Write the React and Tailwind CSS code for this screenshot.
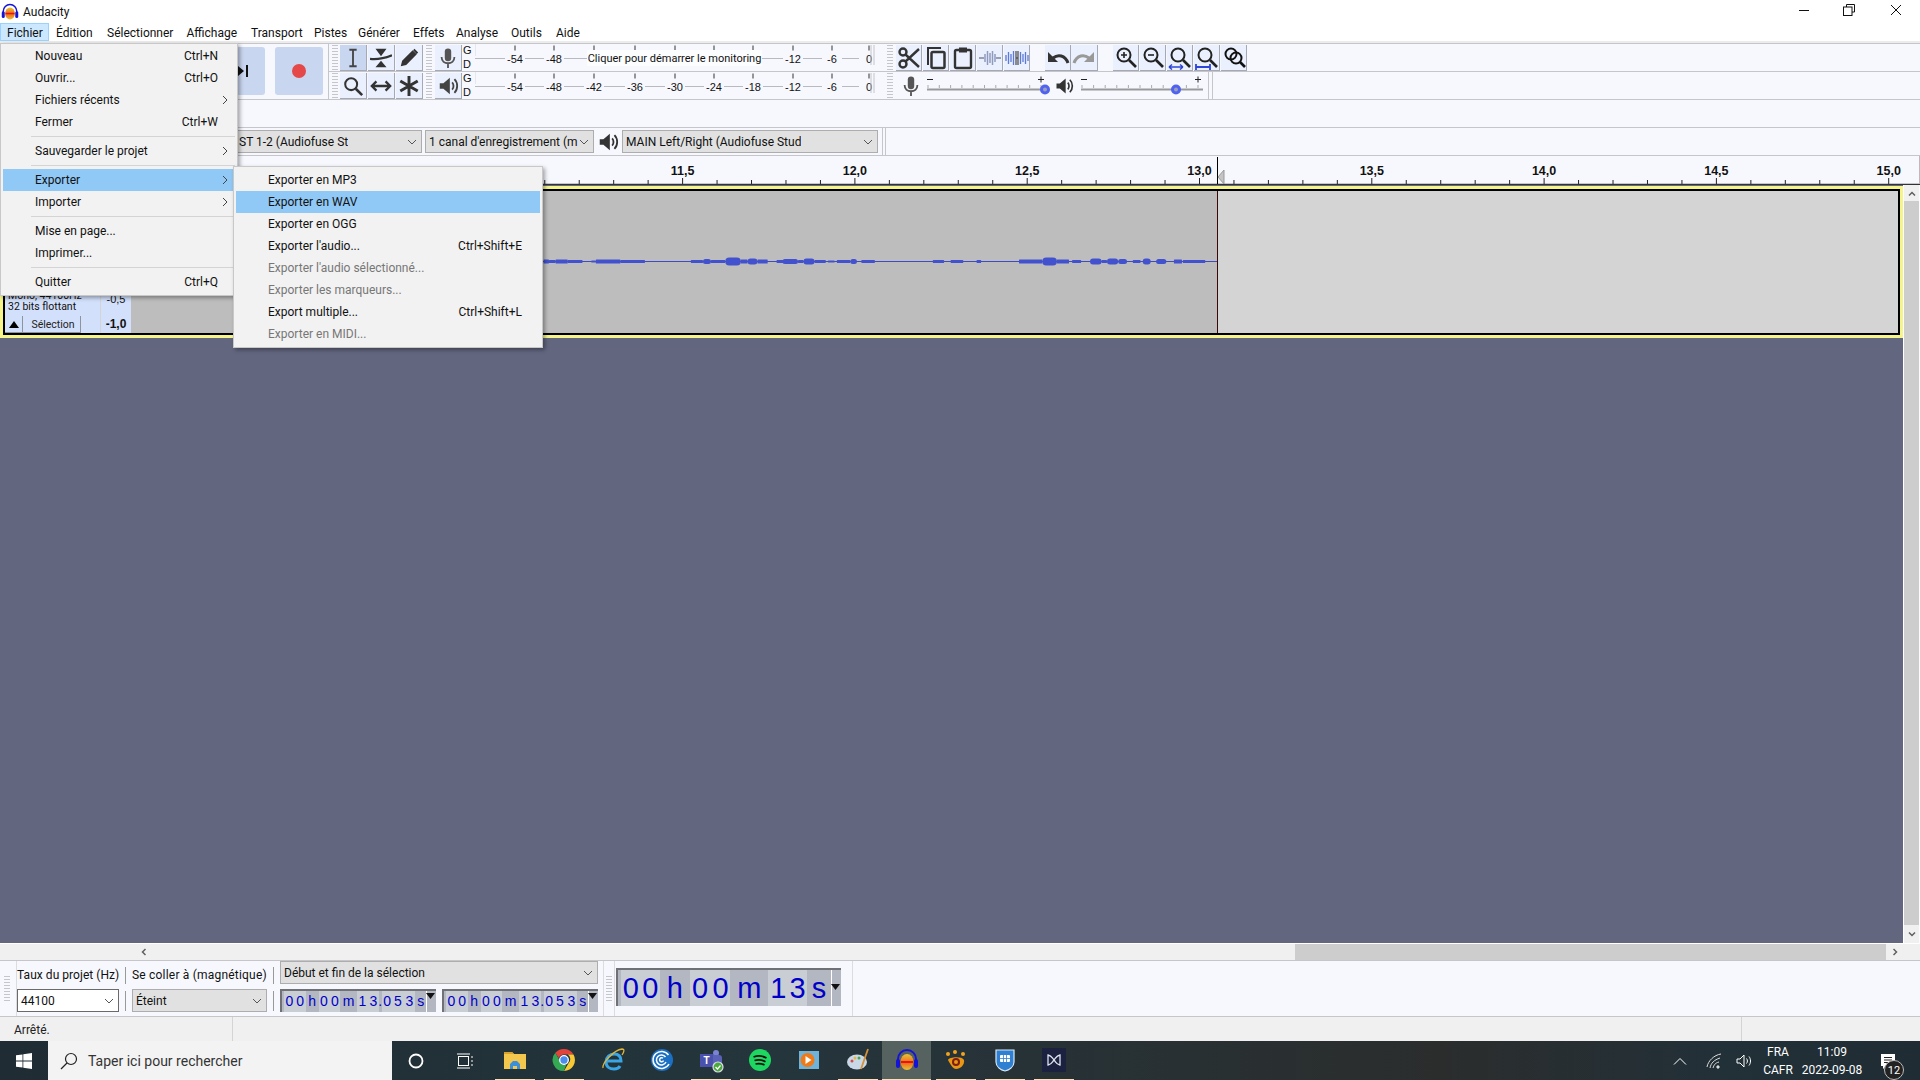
import React from "react";

const mainMenu = [
  { label: "Nouveau", key: "Ctrl+N" },
  { label: "Ouvrir...", key: "Ctrl+O" },
  { label: "Fichiers récents", arrow: true },
  { label: "Fermer", key: "Ctrl+W" },
  { sep: true },
  { label: "Sauvegarder le projet", arrow: true },
  { sep: true },
  { label: "Exporter", arrow: true, active: true },
  { label: "Importer", arrow: true },
  { sep: true },
  { label: "Mise en page..." },
  { label: "Imprimer..." },
  { sep: true },
  { label: "Quitter", key: "Ctrl+Q" },
];

const subMenu = [
  { label: "Exporter en MP3" },
  { label: "Exporter en WAV", active: true },
  { label: "Exporter en OGG" },
  { label: "Exporter l'audio...", key: "Ctrl+Shift+E" },
  { label: "Exporter l'audio sélectionné...", off: true },
  { label: "Exporter les marqueurs...", off: true },
  { label: "Export multiple...", key: "Ctrl+Shift+L" },
  { label: "Exporter en MIDI...", off: true },
];

const menuBar = [
  ["Édition", "w-[51px]"],
  ["Sélectionner", "w-[79.5px]"],
  ["Affichage", "w-[64.5px]"],
  ["Transport", "w-[63px]"],
  ["Pistes", "w-[44px]"],
  ["Générer", "w-[55px]"],
  ["Effets", "w-[43px]"],
  ["Analyse", "w-[55px]"],
  ["Outils", "w-[45px]"],
  ["Aide", "w-[40px]"],
];

// waveform blocks read off the reference: zoomed x1, zoomed x2, half height
const wave = [
  [8, 20, 2], [20, 35, 1.5], [35, 62, 2], [62, 95, 1.5], [115, 125, 1], [125, 180, 2], [180, 235, 1.5],
  [338, 365, 1.5], [365, 383, 2.5], [383, 415, 1.5], [415, 450, 4], [450, 465, 2], [465, 487, 3], [487, 510, 2],
  [530, 545, 1.5], [543, 578, 2.5], [578, 590, 1.5], [590, 615, 3], [615, 640, 1.5], [645, 660, 1], [665, 695, 1.5],
  [695, 710, 2.5], [720, 750, 1.5], [880, 905, 1.5], [920, 948, 1.5], [978, 988, 1.5], [1073, 1125, 2], [1125, 1158, 4],
  [1158, 1185, 2], [1192, 1212, 1.5], [1232, 1258, 3], [1258, 1270, 1.5], [1270, 1295, 3], [1295, 1315, 2.5],
  [1328, 1345, 1.5], [1350, 1368, 3], [1380, 1403, 2.5], [1420, 1438, 2], [1440, 1490, 1.5],
];

function Chevron({ className = "" }) {
  return (
    <svg width="10" height="6" viewBox="0 0 10 6" className={className}>
      <path d="M1 1l4 4 4-4" fill="none" stroke="#555" strokeWidth="1" />
    </svg>
  );
}

function Grip({ className = "" }) {
  return (
    <div className={`flex flex-col justify-center gap-[2px] self-stretch ${className}`}>
      {[...Array(9)].map((_, i) => (
        <div key={i} className="h-[1px] w-[6px] bg-[#c4c6cc]" />
      ))}
    </div>
  );
}

function Btn({ children, on, w = "w-[26px]" }) {
  return (
    <div className={`flex h-[26px] ${w} shrink-0 items-center justify-center border-b border-r border-[#a5a9b3] ${on ? "bg-[#c9d6ef]" : "bg-[#eaf0fd]"}`}>
      {children}
    </div>
  );
}

function Ico({ children, size = 22 }) {
  return (
    <svg width={size} height={size} viewBox="0 0 24 24" fill="none" stroke="#333" strokeWidth="2.4">
      {children}
    </svg>
  );
}

function SpeakerIcon({ size = 22, color = "#444" }) {
  return (
    <Ico size={size}>
      <path d="M3 9h4l7-6v18l-7-6H3z" fill={color} stroke="none" />
      <path d="M16.5 8c2 2 2 6 0 8" stroke={color} strokeWidth="2" />
      <path d="M19 4.500c4 4 4 11 0 15" stroke={color} strokeWidth="2" />
    </Ico>
  );
}

function MicIcon({ size = 22 }) {
  return (
    <Ico size={size}>
      <rect x="8.500" y="1.500" width="7" height="14" rx="3.500" fill="#555" stroke="none" />
      <path d="M5 11c0 9 14 9 14 0M12 18v5" stroke="#555" strokeWidth="2" />
    </Ico>
  );
}

function Glass({ children, extra }) {
  return (
    <Ico size={24}>
      <circle cx="10" cy="9" r="6.500" strokeWidth="2" stroke="#222" />
      <path d="M15 14l7 7" strokeWidth="2.600" stroke="#222" />
      {children}
      {extra}
    </Ico>
  );
}

function Meter({ hint }) {
  const marks = [["-54", 40], ["-48", 79], ["-42", 119], ["-36", 160], ["-30", 200], ["-24", 239], ["-18", 278], ["-12", 318], ["-6", 357], ["0", 394]];
  return (
    <svg width="400" height="27" viewBox="0 0 400 27" className="shrink-0">
      <path d="M0 14.500h398" stroke="#b8bac0" strokeWidth="1" />
      <path d="M0 0v12" stroke="#d8d8dc" strokeWidth="1" />
      {marks.map(([t, x]) => (
        <g key={t}>
          <path d={`M${x} 1.500v5`} stroke="#333" strokeWidth="1" />
          {!(hint && x > 100 && x < 290) && (
            <g>
              <rect x={x - 10} y="8" width="20" height="13" fill="#f7f8fe" />
              <text x={x} y="18.500" textAnchor="middle" fontSize="11" fill="#111" fontFamily="Liberation Sans">{t}</text>
            </g>
          )}
        </g>
      ))}
      <path d="M396 1v20M399 1v20" stroke="#c4c4c8" strokeWidth="1" />
      {hint && (
        <g>
          <rect x="112" y="6" width="175" height="16" fill="#fcfdff" />
          <text x="199.500" y="18" textAnchor="middle" fontSize="11" fill="#111" fontFamily="Roboto">Cliquer pour démarrer le monitoring</text>
        </g>
      )}
    </svg>
  );
}

function GD() {
  return (
    <div className="flex h-[27px] w-[13px] shrink-0 flex-col justify-between pl-[1px] text-[11px] leading-[13px] text-[#111] font-['Liberation_Sans',sans-serif]">
      <span>G</span>
      <span>D</span>
    </div>
  );
}

function Slider({ thumb, width }) {
  const ticks = [...Array(11)].map((_, i) => 2 + (i * (width - 6)) / 10);
  return (
    <svg width={width + 8} height="27" viewBox={`0 0 ${width + 8} 27`} className="shrink-0">
      <path d="M1 7.500h6" stroke="#222" strokeWidth="1" />
      <path d={`M${width - 7} 7.500h6M${width - 4} 4.500v6`} stroke="#222" strokeWidth="1" />
      <path d={`M1 17.500h${width}`} stroke="#999" strokeWidth="2" />
      {ticks.map((x) => (
        <path key={x} d={`M${x} 13v3`} stroke="#aaa" strokeWidth="1" />
      ))}
      <circle cx={thumb} cy="17.500" r="3.500" fill="#9a9fb8" stroke="#4f62f0" strokeWidth="3" />
    </svg>
  );
}

function Combo({ children, className = "", white }) {
  return (
    <div className={`flex items-center justify-between overflow-hidden border px-[3px] ${white ? "border-[#6a6a6a] bg-white" : "border-[#adadad] bg-[#e1e1e1]"} ${className}`}>
      <span className="overflow-hidden whitespace-nowrap text-[12px] text-[#111]">{children}</span>
      <Chevron className="mr-[1px] shrink-0" />
    </div>
  );
}

function TimeBox({ cells, className, fontClass, arrowW, tail }) {
  return (
    <div className={`flex shrink-0 border-l-2 border-t-2 border-[#6f7176] bg-[#b3b7c2] ${className}`}>
      {cells.map(([ch, w, light], i) => (
        <span key={i} style={{ width: w }} className={`flex items-center justify-center overflow-hidden text-[#0000c8] ${fontClass} ${light ? "bg-[#c9cdd4]" : ""}`}>
          {ch}
        </span>
      ))}
      <div style={{ width: arrowW }} className="relative ml-auto border-l border-white">
        <svg width="9" height="6" viewBox="0 0 9 6" className={`absolute right-[1px] ${tail}`}>
          <path d="M0 0h9L4.500 6z" fill="#111" />
        </svg>
      </div>
    </div>
  );
}

const smallCells = [
  ["", 2, false], ["0", 11, true], ["0", 11, true], ["h", 13, false], ["0", 11, true], ["0", 11, true], ["m", 17, false],
  ["1", 11, true], ["3", 11, true], [".", 3, false], ["0", 11, true], ["5", 11, true], ["3", 12, true], ["s", 11, false],
];
const bigCells = [
  ["", 3, false], ["0", 20, true], ["0", 19, true], ["h", 30, false], ["0", 21, true], ["0", 20, true], ["m", 38, false],
  ["1", 20, true], ["3", 19, true], ["s", 24, false],
];

function Track() {
  return (
    <div className="h-[152px] w-[1903px] border-[3px] border-[#f5f58c]">
      <div className="flex h-full border-2 border-black bg-[#d4d4d4]">
        <div className="flex w-[95px] shrink-0 flex-col justify-end bg-[#d3e0fb] text-[10.500px] leading-[11px] text-[#111]">
          <div className="pl-[3px]">Mono, 44100Hz</div>
          <div className="mb-[4px] pl-[3px]">32 bits flottant</div>
          <div className="flex h-[17px]">
            <div className="flex w-[18px] items-center justify-center border-b border-r border-[#8f939e] bg-[#d3e0fb]">
              <svg width="10" height="7" viewBox="0 0 10 7"><path d="M5 0l5 7H0z" fill="#000" /></svg>
            </div>
            <div className="flex w-[58px] items-center justify-center border-b border-r border-[#8f939e] bg-[#d3e0fb] pl-[3px] text-[#222]">Sélection</div>
          </div>
        </div>
        <div className="ml-[1px] flex w-[30px] shrink-0 flex-col items-center justify-end bg-[#d3e0fb] pb-[2px] text-[#111] font-['Liberation_Sans',sans-serif]">
          <div className="mb-[12px] text-[11px] leading-[11px]">-0,5</div>
          <div className="text-[12px] font-bold leading-[14px]">-1,0</div>
        </div>
        <svg width="1086" height="142" viewBox="131 191 1086 142" className="shrink-0 bg-[#bdbdbd]">
          <path d="M543 261.500H1217" stroke="#3f4bc6" strokeWidth="1" />
          {wave.map(([a, b, h]) => (
            <rect key={a} x={540 + a / 2.24} y={261.5 - h} width={(b - a) / 2.24} height={h * 2} rx={h >= 2.5 ? h : 0.5} fill="#4252cf" />
          ))}
        </svg>
        <div className="w-[1px] shrink-0 bg-[#3a0808]" />
      </div>
    </div>
  );
}

function Ruler() {
  const ticks = [];
  for (let i = 0; i < 46; i++) ticks.push(338 + i * 34.46);
  const labels = ["10,5", "11,0", "11,5", "12,0", "12,5", "13,0", "13,5", "14,0", "14,5", "15,0"];
  return (
    <svg width="1920" height="29" viewBox="0 156 1920 29" className="block shrink-0 bg-[#f7f8fe]">
      {ticks.map((x, i) => (
        <path key={i} d={i % 5 === 0 ? `M${x} 178v6` : `M${x} 180v4`} stroke="#222" strokeWidth="1" />
      ))}
      {labels.map((t, i) => (
        <text key={t} x={338 + i * 172.3} y="174.500" textAnchor="middle" fontSize="12.500" fontWeight="700" fill="#111" fontFamily="Liberation Sans">{t}</text>
      ))}
      <path d="M0 184.500H1920" stroke="#333" strokeWidth="1.500" />
      <path d="M1217.500 157v27" stroke="#000" strokeWidth="1" />
      <path d="M1224 170v14l-6-7z" fill="#c4c4c4" stroke="#999" strokeWidth="1" />
      <path d="M1919.500 156v28" stroke="#bbb" strokeWidth="1" />
    </svg>
  );
}

function MenuRow({ item, className }) {
  return (
    <div className={`flex h-[22px] items-center justify-between ${item.active ? "bg-[#90c8f6]" : ""} ${item.off ? "text-[#777]" : "text-[#111]"} ${className}`}>
      <span>{item.label}</span>
      {item.key && <span>{item.key}</span>}
      {item.arrow && (
        <svg width="6" height="10" viewBox="0 0 6 10" className="mr-[-10px]">
          <path d="M1 1l4 4-4 4" fill="none" stroke="#444" strokeWidth="1" />
        </svg>
      )}
    </div>
  );
}

function TaskSlot({ children, line = true, active }) {
  return (
    <div className={`flex h-[40px] w-[49px] shrink-0 flex-col items-center ${active ? "bg-[#55625f]" : ""}`}>
      <div className="flex flex-1 items-center justify-center">{children}</div>
      <div className={`h-[2px] ${active ? "w-full" : "w-[40px]"} ${line ? "bg-[#fcdfb8]" : ""}`} />
    </div>
  );
}

function AudacityLogo({ size = 24 }) {
  return (
    <svg width={size} height={size} viewBox="0 0 24 24">
      <defs>
        <linearGradient id="audaFill" x1="0" y1="0" x2="0" y2="1">
          <stop offset="0" stopColor="#e8c23a" />
          <stop offset="0.55" stopColor="#f06a1a" />
          <stop offset="1" stopColor="#e8c23a" />
        </linearGradient>
      </defs>
      <ellipse cx="12" cy="14" rx="6.500" ry="8" fill="url(#audaFill)" />
      <path d="M6 14h12" stroke="#e11" strokeWidth="2" />
      <path d="M3 15V11a9 9 0 0118 0v4" fill="none" stroke="#1414d8" strokeWidth="2" />
      <rect x="1" y="11" width="4" height="9" rx="2" fill="#1414d8" />
      <rect x="19" y="11" width="4" height="9" rx="2" fill="#1414d8" />
    </svg>
  );
}

function Taskbar() {
  return (
    <div className="flex h-[40px] shrink-0 items-center bg-[linear-gradient(90deg,#1f2c33_0%,#24353c_40%,#2b2d2d_75%,#223038_90%,#1f2c33_100%)] text-white">
      <div className="flex h-full w-[48px] shrink-0 items-center justify-center">
        <svg width="16" height="16" viewBox="0 0 16 16" fill="#fff">
          <path d="M0 2.300l6.500-.9v6.200H0zM7.300 1.300L16 0v7.600H7.300zM0 8.400h6.500v6.200L0 13.700zM7.300 8.400H16V16l-8.700-1.200z" />
        </svg>
      </div>
      <div className="flex h-full w-[344px] shrink-0 items-center bg-[#f3f3f3] pl-[12px] text-[#333]">
        <svg width="18" height="18" viewBox="0 0 18 18" fill="none" stroke="#222" strokeWidth="1.200">
          <circle cx="11" cy="7" r="5.500" />
          <path d="M7 11l-6 6" />
        </svg>
        <span className="ml-[10px] text-[14px]">Taper ici pour rechercher</span>
      </div>
      <div className="flex h-full w-[48px] shrink-0 items-center justify-center">
        <svg width="16" height="16" viewBox="0 0 16 16"><circle cx="8" cy="8" r="6.500" fill="none" stroke="#fff" strokeWidth="1.800" /></svg>
      </div>
      <div className="flex h-full w-[50px] shrink-0 items-center justify-center">
        <svg width="18" height="16" viewBox="0 0 18 16" fill="none" stroke="#fff" strokeWidth="1">
          <rect x="2.500" y="3.500" width="10" height="9" />
          <path d="M1 1h13M1 15h13M16 3v2M16 7v2M16 11v2" />
        </svg>
      </div>
      <TaskSlot>
        <svg width="24" height="24" viewBox="0 0 24 24">
          <path d="M1 4h8l2 2h12v15H1z" fill="#f3c64e" />
          <path d="M1 4h8l2 2H1z" fill="#d7a12c" />
          <path d="M7 21v-5l3-3h4l3 3v5h-3v-3h-4v3z" fill="#3a8fd8" />
        </svg>
      </TaskSlot>
      <TaskSlot>
        <svg width="24" height="24" viewBox="0 0 24 24">
          <path d="M12 1a11 11 0 019.500 5.500H12a5.500 5.500 0 00-5.200 3.700L3.300 4.800A11 11 0 0112 1z" fill="#e0443a" />
          <path d="M21.500 6.500A11 11 0 0112 23l4.800-8.200a5.500 5.500 0 00-1-8.300z" fill="#f7c935" />
          <path d="M3.300 4.800l4.700 8.400a5.500 5.500 0 006.500 3.100L11.800 23A11 11 0 013.300 4.800z" fill="#34a853" />
          <circle cx="12" cy="12" r="4.300" fill="#4a8cf0" stroke="#fff" strokeWidth="1.300" />
        </svg>
      </TaskSlot>
      <TaskSlot line={false}>
        <svg width="26" height="26" viewBox="0 0 26 26" fill="none">
          <path d="M6 14h15c0-5-3-7-7-7s-8 3-8 8 4 7 8 7c3 0 5-1 6-3" stroke="#39a5e6" strokeWidth="3" />
          <path d="M3 21C2 16 14 3 22 2c3 0 2 3 0 6" stroke="#e0b53a" strokeWidth="1.300" />
        </svg>
      </TaskSlot>
      <TaskSlot line={false}>
        <svg width="24" height="24" viewBox="0 0 24 24" fill="none">
          <circle cx="12" cy="12" r="11" fill="#1b70c4" />
          <path d="M19 16a8.500 8.500 0 11-.5-9M16 14a5 5 0 11-.5-5M13.500 12.500a2 2 0 11-.5-2.200" stroke="#fff" strokeWidth="1.500" />
        </svg>
      </TaskSlot>
      <TaskSlot>
        <svg width="26" height="26" viewBox="0 0 26 26">
          <circle cx="18" cy="6" r="3" fill="#7b83d6" />
          <rect x="10" y="8" width="14" height="12" rx="3" fill="#5a62b8" />
          <rect x="2" y="7" width="13" height="13" fill="#4a52ad" />
          <text x="8.500" y="17" textAnchor="middle" fontSize="10" fontWeight="700" fill="#fff" fontFamily="Liberation Sans">T</text>
          <circle cx="20" cy="20" r="5" fill="#4caa3a" stroke="#dde" strokeWidth="1.200" />
          <path d="M17.500 20l2 2 3-3.500" fill="none" stroke="#fff" strokeWidth="1.200" />
        </svg>
      </TaskSlot>
      <TaskSlot>
        <svg width="24" height="24" viewBox="0 0 24 24" fill="none">
          <circle cx="12" cy="12" r="11" fill="#1ed760" />
          <path d="M5.500 9c4-1.500 9-1.200 13 1M6.500 12.500c3.500-1 7.500-.7 11 1.200M7.500 16c3-.8 6-.5 9 1" stroke="#111" strokeWidth="1.800" />
        </svg>
      </TaskSlot>
      <TaskSlot line={false}>
        <svg width="22" height="22" viewBox="0 0 22 22">
          <rect x="1" y="2" width="20" height="18" fill="#6fb4d8" />
          <circle cx="9.500" cy="11" r="7" fill="#ef7a1a" />
          <path d="M7.500 7l6 4-6 4z" fill="#fff" />
        </svg>
      </TaskSlot>
      <TaskSlot>
        <svg width="24" height="24" viewBox="0 0 24 24">
          <ellipse cx="11" cy="14" rx="10" ry="7.500" fill="#c9d8e6" />
          <circle cx="6" cy="13" r="1.500" fill="#d94a4a" />
          <circle cx="9" cy="10" r="1.500" fill="#e4b93c" />
          <circle cx="13" cy="10" r="1.500" fill="#49a44f" />
          <path d="M22 1l-7 20" stroke="#d5903a" strokeWidth="1.800" />
        </svg>
      </TaskSlot>
      <TaskSlot active>
        <AudacityLogo />
      </TaskSlot>
      <TaskSlot>
        <svg width="24" height="24" viewBox="0 0 24 24" fill="none">
          <path d="M4 12c1-3 14-4 16 0 1 5-4 9-8 9-3 0-6-5-8-9z" fill="#e89614" />
          <circle cx="12" cy="14" r="4" fill="#7c1f10" />
          <circle cx="12" cy="14" r="2" fill="#e89614" />
          <circle cx="4" cy="6" r="2" fill="#f1a51e" />
          <circle cx="11" cy="4" r="2" fill="#f1a51e" />
          <circle cx="19" cy="6" r="2" fill="#f1a51e" />
        </svg>
      </TaskSlot>
      <TaskSlot>
        <svg width="22" height="24" viewBox="0 0 22 24">
          <path d="M2 2h18v12c0 5-5 8-9 9-4-1-9-4-9-9z" fill="#2f80d2" stroke="#dbe9f5" strokeWidth="1.200" />
          <rect x="6" y="7" width="10" height="7" rx="1" fill="#fff" />
          <path d="M6 10.500h10M9.500 7v7M12.500 7v7" stroke="#2f80d2" strokeWidth="0.800" />
        </svg>
      </TaskSlot>
      <TaskSlot>
        <div className="flex h-[24px] w-[24px] items-center justify-center bg-[#1a2240]">
          <svg width="14" height="12" viewBox="0 0 14 12" fill="none" stroke="#dfe3ee" strokeWidth="1.300">
            <path d="M1 1c4 1 4 3 6 5 2-2 2-4 6-5v10c-4-1-4-3-6-5-2 2-2 4-6 5z" />
          </svg>
        </div>
      </TaskSlot>
      <div className="ml-auto flex h-full items-center">
        <div className="flex w-[40px] justify-center">
          <svg width="14" height="8" viewBox="0 0 14 8" fill="none" stroke="#fff" strokeWidth="1"><path d="M1 7.500l6-6 6 6" /></svg>
        </div>
        <div className="flex w-[28px] justify-center">
          <svg width="16" height="16" viewBox="0 0 16 16" fill="none" stroke="#ddd" strokeWidth="1">
            <path d="M1 14C2 8 8 2 15 1M4 15c1-5 4-8 10-10M7 15c1-3 2-5 6-6" />
            <circle cx="12" cy="14" r="1.200" fill="#ddd" />
          </svg>
        </div>
        <div className="flex w-[32px] justify-center">
          <svg width="17" height="16" viewBox="0 0 17 16" fill="none" stroke="#fff" strokeWidth="1">
            <path d="M1 6h3l4-4v12l-4-4H1zM10.500 5.500c1.200 1.500 1.200 3.500 0 5M13 3.500c2 2.500 2 6.500 0 9" />
          </svg>
        </div>
        <div className="flex w-[36px] flex-col items-center text-[12px] leading-[18px]">
          <span>FRA</span>
          <span>CAFR</span>
        </div>
        <div className="flex w-[72px] flex-col items-center text-[12px] leading-[18px]">
          <span>11:09</span>
          <span>2022-09-08</span>
        </div>
        <div className="relative flex w-[52px] justify-center pr-[12px]">
          <svg width="16" height="16" viewBox="0 0 16 16">
            <path d="M1 1h14v12H6l-3 3v-3H1z" fill="#fff" />
            <path d="M4 4.500h8M4 7h8M4 9.500h8" stroke="#222" strokeWidth="1" />
          </svg>
          <div className="absolute left-[16px] top-[7px] flex h-[20px] w-[20px] items-center justify-center rounded-full border border-[#bbb] bg-[#222] text-[11px] leading-none">12</div>
        </div>
      </div>
    </div>
  );
}

export default function App() {
  return (
    <div className="relative flex h-[1080px] w-[1920px] flex-col overflow-hidden bg-white font-[Roboto,sans-serif] text-[12px]">
      {/* title bar */}
      <div className="flex h-[23px] shrink-0 items-center justify-between">
        <div className="flex items-center pl-[1px] text-[#111]">
          <AudacityLogo size={18} />
          <span className="ml-[4px]">Audacity</span>
        </div>
        <div className="flex self-start pt-[4px]">
          <div className="flex w-[46px] justify-center"><svg width="12" height="12" viewBox="0 0 12 12"><path d="M1 6.500h10" stroke="#111" /></svg></div>
          <div className="flex w-[44px] justify-center">
            <svg width="12" height="12" viewBox="0 0 12 12" fill="none" stroke="#111"><path d="M3.500 3V.500h8v7.500H9" /><rect x=".5" y="3" width="8.500" height="8.500" /></svg>
          </div>
          <div className="flex w-[49px] justify-center"><svg width="12" height="12" viewBox="0 0 12 12"><path d="M1 1l10 10M11 1L1 11" stroke="#111" /></svg></div>
        </div>
      </div>

      {/* menu bar */}
      <div className="flex h-[18px] shrink-0 items-center text-[#111]">
        <div className="flex h-full w-[49px] items-center border border-[#99d1ff] bg-[#cce8ff] pl-[6px] pt-[1px]">Fichier</div>
        {menuBar.map(([m, w]) => (
          <div key={m} className={`${w} pl-[7px] pt-[1px]`}>{m}</div>
        ))}
      </div>
      <div className="h-[3px] shrink-0 border-b border-[#c6c6ca] bg-[#ececec]" />

      {/* transport, tools and meters */}
      <div className="flex h-[56px] shrink-0 bg-[#f7f8fe]">
        <div className="flex w-[329px] shrink-0 justify-end gap-[10px] border-b border-r border-[#c6c6ca] pr-[5px] pt-[3px]">
          <div className="flex h-[48px] w-[48px] items-center justify-end rounded-[3px] bg-[#c9d6ef] pr-[17px]">
            <svg width="10" height="12" viewBox="0 0 10 12"><path d="M0 1l6 5-6 5zM8 0h2v12H8z" fill="#111" /></svg>
          </div>
          <div className="flex h-[48px] w-[48px] items-center justify-center rounded-[3px] bg-[#c9d6ef]">
            <div className="h-[14px] w-[14px] rounded-full bg-[#e54848]" />
          </div>
        </div>
        <div className="flex min-w-0 flex-1 flex-col">
          <div className="flex h-[28px] items-end border-b border-[#c6c6ca]">
            <Grip className="w-[11px] shrink-0 items-center" />
            <Btn on w="w-[27px]"><Ico><path d="M8 3h8M12 3v18M8 21h8" stroke="#444" strokeWidth="2" /></Ico></Btn>
            <div className="ml-[1px]"><Btn w="w-[27px]"><Ico><path d="M6 2h12l-6 8zM12 15l6 7H6z" fill="#333" stroke="none" /><path d="M0 13c8 1 14 0 24-4" strokeWidth="2.500" /></Ico></Btn></div>
            <div className="ml-[1px]"><Btn w="w-[27px]"><Ico><path d="M3 21l1.500-6L16 3.500l4.500 4.500L9 19.500zM18 2l4 4-1.500 1.500-4-4z" fill="#333" stroke="none" /></Ico></Btn></div>
            <Grip className="w-[12px] shrink-0 items-center" />
            <Btn w="w-[27px]"><MicIcon /></Btn>
            <GD />
            <Meter hint />
            <Grip className="ml-[8px] w-[13px] shrink-0 items-center" />
            <Btn><Ico size={24}><circle cx="6" cy="6" r="3.500" /><circle cx="6" cy="18" r="3.500" /><path d="M8.500 8.500L22 21M8.500 15.500L22 3" /></Ico></Btn>
            <div className="ml-[1px]"><Btn><Ico size={24}><path d="M4 19V2h13" strokeWidth="2" /><rect x="7.500" y="6" width="13" height="16" rx="1.500" strokeWidth="2.500" /></Ico></Btn></div>
            <div className="ml-[1px]"><Btn><Ico size={24}><rect x="4" y="4" width="16" height="18" rx="1.500" strokeWidth="2.400" /><rect x="8" y="1.500" width="8" height="5" fill="#333" stroke="none" /></Ico></Btn></div>
            <div className="ml-[1px]"><Btn><Ico size={24}><path d="M1 12h5M18 12h5" stroke="#7c8799" strokeWidth="1.500" /><path d="M7 8v8M9.500 5v14M12 7v10M14.500 5v14M17 8v8" stroke="#8f9bbe" strokeWidth="1.500" /></Ico></Btn></div>
            <div className="ml-[1px]"><Btn><Ico size={24}><path d="M1 9v6M3.500 6v12M6 8v8M8.500 5v14M15.500 6v12M18 8v8M20.500 6v12M23 9v6" stroke="#5c78d8" strokeWidth="1.300" /><path d="M11 5v14M13 5v14M11 12h2" stroke="#555" strokeWidth="1.300" /></Ico></Btn></div>
            <div className="ml-[15px]"><Btn><Ico size={24}><path d="M2 6v10h10z" fill="#333" stroke="none" /><path d="M7 12c5-4 12-3 15 5" strokeWidth="3" /></Ico></Btn></div>
            <Btn w="w-[27px]"><Ico size={24}><path d="M22 6v10H12z" fill="#999" stroke="none" /><path d="M17 12c-5-4-12-3-15 5" stroke="#999" strokeWidth="3" /></Ico></Btn>
            <div className="ml-[15px]"><Btn><Glass><path d="M7 9h6M10 6v6" strokeWidth="1.600" stroke="#222" /></Glass></Btn></div>
            <div className="ml-[1px]"><Btn><Glass><path d="M7 9h6" strokeWidth="1.600" stroke="#222" /></Glass></Btn></div>
            <div className="ml-[1px]"><Btn><Glass extra={<path d="M1 21h14M1 21l3-2.500M1 21l3 2.500M15 21l-3-2.500M15 21l-3 2.500" stroke="#2f45d8" strokeWidth="1.500" />} /></Btn></div>
            <div className="ml-[1px]"><Btn><Glass extra={<path d="M1 18v6M15 18v6M1 21h14" stroke="#2f45d8" strokeWidth="1.800" />} /></Btn></div>
            <div className="ml-[1px]"><Btn><Ico size={24}><circle cx="9" cy="8" r="5.500" strokeWidth="2" stroke="#111" /><circle cx="14" cy="12" r="5.500" strokeWidth="2" stroke="#111" /><path d="M18 16l5 5" strokeWidth="2.600" stroke="#111" /></Ico></Btn></div>
          </div>
          <div className="flex h-[28px] items-end border-b border-[#c6c6ca]">
            <Grip className="w-[11px] shrink-0 items-center" />
            <Btn w="w-[27px]"><Ico><circle cx="10" cy="10" r="6.500" strokeWidth="2.200" /><path d="M15 15l7 7" strokeWidth="2.800" /></Ico></Btn>
            <div className="ml-[1px]"><Btn w="w-[27px]"><Ico><path d="M2 12h20M7 7l-5 5 5 5M17 7l5 5-5 5" strokeWidth="2.500" /></Ico></Btn></div>
            <div className="ml-[1px]"><Btn w="w-[27px]"><Ico><path d="M12 1v22M2.500 6.500l19 11M2.500 17.500l19-11" strokeWidth="3.200" /></Ico></Btn></div>
            <Grip className="w-[12px] shrink-0 items-center" />
            <Btn w="w-[27px]"><SpeakerIcon /></Btn>
            <GD />
            <Meter />
            <Grip className="ml-[8px] w-[13px] shrink-0 items-center" />
            <div className="flex h-[27px] w-[30px] shrink-0 items-center justify-center"><MicIcon /></div>
            <Slider thumb={119} width={119} />
            <div className="ml-[-6px] flex h-[27px] w-[33px] shrink-0 items-center justify-center"><SpeakerIcon size={20} color="#333" /></div>
            <Slider thumb={96} width={122} />
            <div className="ml-[-2px] h-[27px] w-[5px] border-x border-[#c6c6ca]" />
          </div>
        </div>
      </div>

      <div className="h-[28px] shrink-0 border-b border-[#c6c6ca] bg-[#f7f8fe]" />

      {/* devices */}
      <div className="flex h-[28px] shrink-0 items-center border-b border-[#c6c6ca] bg-[#f7f8fe]">
        <Combo className="ml-[180px] h-[23px] w-[242px] pl-[58px]">ST 1-2 (Audiofuse St</Combo>
        <Combo className="ml-[3px] h-[23px] w-[169px]">1 canal d'enregistrement (m</Combo>
        <div className="flex w-[28px] shrink-0 items-center justify-center"><SpeakerIcon color="#333" /></div>
        <Combo className="h-[23px] w-[256px]">MAIN Left/Right (Audiofuse Stud</Combo>
        <div className="ml-[4px] h-full w-[4px] border-x border-[#c6c6ca]" />
      </div>

      <Ruler />

      {/* track area */}
      <div className="flex h-[758px] shrink-0 bg-[#62667f]">
        <div className="relative min-w-0 flex-1 pt-[1px]">
          <Track />
        </div>
        <div className="flex w-[17px] shrink-0 flex-col bg-white pl-[1px] pr-[1px]">
          <div className="flex h-[16px] items-center justify-center bg-[#f0f0f0]">
            <svg width="8" height="5" viewBox="0 0 8 5"><path d="M1 4.500l3-3 3 3" fill="none" stroke="#606060" strokeWidth="1.500" /></svg>
          </div>
          <div className="flex-1 bg-[#cdcdcd]" />
          <div className="flex h-[18px] items-center justify-center bg-[#f0f0f0]">
            <svg width="8" height="5" viewBox="0 0 8 5"><path d="M1 .5l3 3 3-3" fill="none" stroke="#606060" strokeWidth="1.500" /></svg>
          </div>
        </div>
      </div>

      {/* horizontal scrollbar */}
      <div className="flex h-[18px] shrink-0 items-center border-b border-t border-b-[#c6c6ca] border-t-white bg-[#f0f0f0]">
        <div className="flex w-[1295px] shrink-0 justify-start pl-[141px]">
          <svg width="5" height="8" viewBox="0 0 5 8"><path d="M4.500 1l-3 3 3 3" fill="none" stroke="#606060" strokeWidth="1.500" /></svg>
        </div>
        <div className="h-full w-[591px] shrink-0 bg-[#cdcdcd]" />
        <div className="pl-[7px]">
          <svg width="5" height="8" viewBox="0 0 5 8"><path d="M.5 1l3 3-3 3" fill="none" stroke="#606060" strokeWidth="1.500" /></svg>
        </div>
      </div>

      {/* selection toolbar */}
      <div className="flex h-[56px] shrink-0 border-b border-[#c6c6ca] bg-[#f7f8fe] text-[#111]">
        <div className="flex w-[17px] shrink-0 justify-center border-r border-[#dcdcdf] pr-[3px]"><Grip /></div>
        <div className="flex w-[102px] shrink-0 flex-col">
          <div className="flex h-[28px] items-center whitespace-nowrap tracking-[0.05px]">Taux du projet (Hz)</div>
          <Combo white className="h-[23px]">44100</Combo>
        </div>
        <div className="mx-[6px] flex w-[1px] shrink-0 flex-col">
          <div className="mt-[6px] h-[17px] bg-[#999]" />
          <div className="mt-[7px] h-[20px] bg-[#999]" />
        </div>
        <div className="flex w-[135px] shrink-0 flex-col">
          <div className="flex h-[28px] items-center whitespace-nowrap tracking-[0.2px]">Se coller à (magnétique)</div>
          <Combo className="h-[23px]">Éteint</Combo>
        </div>
        <div className="mx-[6px] flex w-[1px] shrink-0 flex-col">
          <div className="mt-[6px] h-[17px] bg-[#999]" />
          <div className="mt-[7px] h-[20px] bg-[#999]" />
        </div>
        <div className="flex w-[318px] shrink-0 flex-col">
          <Combo className="h-[23px]">Début et fin de la sélection</Combo>
          <div className="mt-[5px] flex gap-[6px] font-['Liberation_Sans',sans-serif]">
            <TimeBox cells={smallCells} fontClass="text-[14px]" arrowW={10} tail="top-[2px]" className="h-[23px] w-[156px]" />
            <TimeBox cells={smallCells} fontClass="text-[14px]" arrowW={10} tail="top-[2px]" className="h-[23px] w-[156px]" />
          </div>
        </div>
        <div className="ml-[5px] flex w-[12px] shrink-0 justify-center border-x border-[#dcdcdf]"><Grip /></div>
        <div className="ml-[1px] pt-[7px] font-['Liberation_Sans',sans-serif]">
          <TimeBox cells={bigCells} fontClass="text-[29px] leading-none" arrowW={10} tail="top-[14px]" className="h-[38px] w-[225px]" />
        </div>
        <div className="ml-[11px] h-full w-[1px] bg-[#dcdcdf]" />
      </div>

      {/* status bar */}
      <div className="flex h-[24px] shrink-0 items-center bg-[#f0f0f0] text-[#222]">
        <div className="flex h-full w-[233px] shrink-0 items-center border-r border-[#d4d4d4] pl-[14px] pt-[2px]">Arrêté.</div>
        <div className="ml-auto mr-[178px] h-full w-[1px] bg-[#d4d4d4]" />
      </div>

      <Taskbar />

      {/* file menu, open */}
      <div className="absolute left-0 top-[43px] flex h-[253px] w-[238px] flex-col border border-[#c8c8c8] bg-[#f2f2f2] px-[2px] pt-[1px] shadow-[2px_2px_4px_rgba(0,0,0,0.35)]">
        {mainMenu.map((item, i) =>
          item.sep ? (
            <div key={i} className="flex h-[7px] items-start pl-[28px] pt-[3px]">
              <div className="h-[1px] w-full bg-[#d4d4d4]" />
            </div>
          ) : (
            <MenuRow key={i} item={item} className="pl-[32px] pr-[17px]" />
          )
        )}
      </div>

      {/* export submenu */}
      <div className="absolute left-[233px] top-[166px] flex h-[182px] w-[310px] flex-col border border-[#c8c8c8] bg-[#f2f2f2] px-[2px] pt-[2px] shadow-[2px_2px_4px_rgba(0,0,0,0.35)]">
        {subMenu.map((item) => (
          <MenuRow key={item.label} item={item} className="pl-[32px] pr-[18px]" />
        ))}
      </div>
    </div>
  );
}
